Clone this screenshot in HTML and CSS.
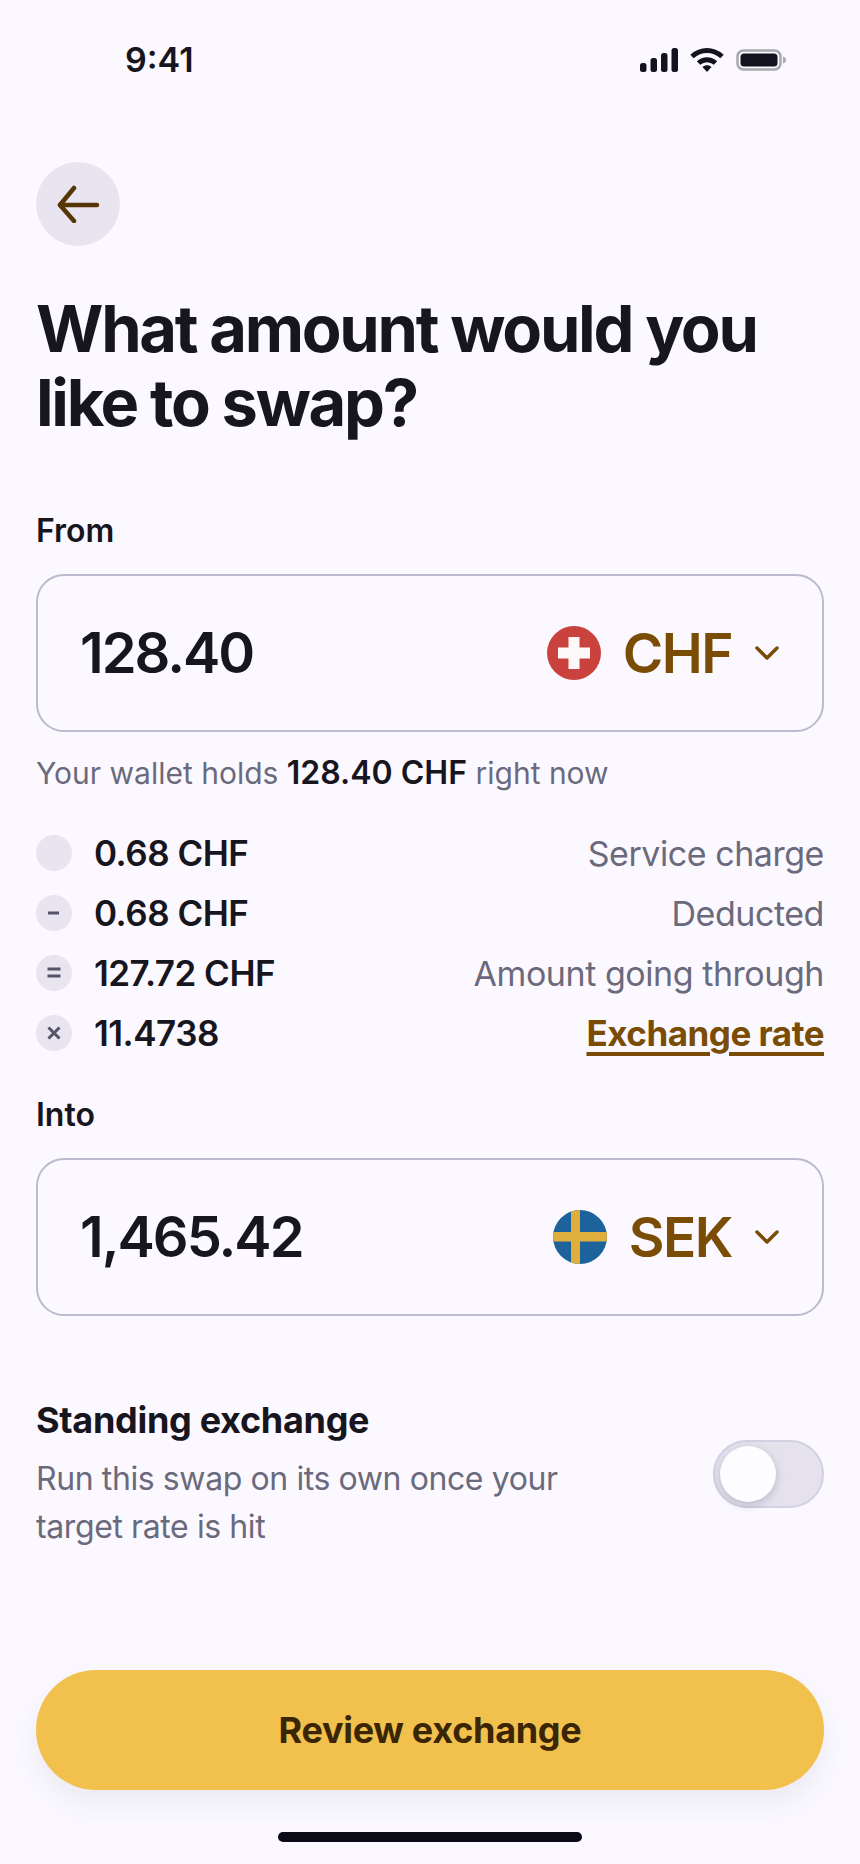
FILE: index.html
```html
<!DOCTYPE html>
<html lang="en">

<head>
    <meta charset="UTF-8">
    <meta name="viewport" content="width=device-width, initial-scale=1.0">
    <title>Swap</title>
    <link rel="stylesheet" href="styles.css">
</head>

<body>
    <div class="screen">
        <div class="status-bar">
            <span class="time">9:41</span>
            <div class="status-icons">
                <svg width="38" height="24" viewBox="0 0 38 24" fill="#14121f">
                    <rect x="0" y="15" width="6.5" height="9" rx="2.5"/>
                    <rect x="10.500" y="10" width="6.5" height="14" rx="2.5"/>
                    <rect x="21" y="5" width="6.500" height="19" rx="2.5"/>
                    <rect x="31.500" y="0" width="6.500" height="24" rx="2.5"/>
                </svg>
                <svg width="34" height="24" viewBox="0 0 34 24" fill="none" stroke="#14121f" stroke-width="5">
                    <path d="M2 8.500 C11 0.500 23 0.500 32 8.500"/>
                    <path d="M8.500 15 C13.500 10.500 20.500 10.500 25.500 15"/>
                    <path d="M12.500 19 L17 24 L21.500 19 C19 16.500 15 16.500 12.500 19 Z" fill="#14121f" stroke="none"/>
                </svg>
                <svg width="50" height="22" viewBox="0 0 50 22">
                    <rect x="1.500" y="1.500" width="43" height="19" rx="6" fill="none" stroke="#a9a8b0" stroke-width="2.500"/>
                    <rect x="4.500" y="4.500" width="37" height="13" rx="3.500" fill="#14121f"/>
                    <path d="M47 7.500 C49 8 50 9.500 50 11 C50 12.500 49 14 47 14.500 Z" fill="#a9a8b0"/>
                </svg>
            </div>
        </div>

        <button class="back-button">
            <svg width="44" height="38" viewBox="0 0 44 38" fill="none" stroke="#563605" stroke-width="4.500" stroke-linecap="round" stroke-linejoin="round">
                <path d="M41 20 H4"/>
                <path d="M18 3 L4 20 L18 36"/>
            </svg>
        </button>

        <h1>What amount would you like to swap?</h1>

        <label class="field-label label-from">From</label>
        <div class="amount-box">
            <span class="amount">128.40</span>
            <div class="currency">
                <svg class="flag" viewBox="0 0 54 54">
                    <circle cx="27" cy="27" r="27" fill="#c9423d"/>
                    <path d="M21.500 11 H32.500 V21.500 H43 V32.500 H32.500 V43 H21.500 V32.500 H11 V21.500 H21.500 Z" fill="#fdf9fb"/>
                </svg>
                <span class="code">CHF</span>
                <svg class="chevron" width="24" height="14" viewBox="0 0 24 14" fill="none" stroke="#7a4c05" stroke-width="3.500" stroke-linecap="round" stroke-linejoin="round">
                    <path d="M2 2 L12 12 L22 2"/>
                </svg>
            </div>
        </div>
        <p class="wallet-note">Your wallet holds <strong>128.40 CHF</strong> right now</p>

        <div class="fee-list">
            <div class="fee-row">
                <span class="fee-icon"></span>
                <span class="fee-value">0.68 CHF</span>
                <span class="fee-name">Service charge</span>
            </div>
            <div class="fee-row">
                <span class="fee-icon">
                    <svg width="16" height="16" viewBox="0 0 16 16" stroke="#55536a" stroke-width="3"><path d="M2 8 H13"/></svg>
                </span>
                <span class="fee-value">0.68 CHF</span>
                <span class="fee-name">Deducted</span>
            </div>
            <div class="fee-row">
                <span class="fee-icon">
                    <svg width="16" height="16" viewBox="0 0 16 16" stroke="#55536a" stroke-width="3"><path d="M1.500 4 H14.500 M1.500 11 H14.500"/></svg>
                </span>
                <span class="fee-value">127.72 CHF</span>
                <span class="fee-name">Amount going through</span>
            </div>
            <div class="fee-row">
                <span class="fee-icon">
                    <svg width="16" height="16" viewBox="0 0 16 16" stroke="#55536a" stroke-width="3"><path d="M2.500 2.500 L13.500 13.500 M13.500 2.500 L2.500 13.500"/></svg>
                </span>
                <span class="fee-value">11.4738</span>
                <a class="fee-link" href="#">Exchange rate</a>
            </div>
        </div>

        <label class="field-label label-into">Into</label>
        <div class="amount-box">
            <span class="amount">1,465.42</span>
            <div class="currency">
                <svg class="flag" viewBox="0 0 54 54">
                    <clipPath id="flagClip"><circle cx="27" cy="27" r="27"/></clipPath>
                    <g clip-path="url(#flagClip)">
                        <rect width="54" height="54" fill="#1c639c"/>
                        <rect x="18" width="9" height="54" fill="#dfae3c"/>
                        <rect y="22" width="54" height="9.500" fill="#dfae3c"/>
                    </g>
                </svg>
                <span class="code">SEK</span>
                <svg class="chevron" width="24" height="14" viewBox="0 0 24 14" fill="none" stroke="#7a4c05" stroke-width="3.500" stroke-linecap="round" stroke-linejoin="round">
                    <path d="M2 2 L12 12 L22 2"/>
                </svg>
            </div>
        </div>

        <div class="standing">
            <div class="standing-text">
                <h2>Standing exchange</h2>
                <p>Run this swap on its own once your target rate is hit</p>
            </div>
            <div class="toggle"><div class="knob"></div></div>
        </div>

        <button class="review-button">Review exchange</button>
        <div class="home-bar"></div>
    </div>
</body>

</html>
```

FILE: styles.css
```css
body {
    font-family: Inter, "Liberation Sans", sans-serif;
    background-color: #fbf9ff;
    color: #17151e;
    margin: 0;
    padding: 0;
}

.screen {
    display: flex;
    flex-direction: column;
    height: 1864px;
    padding: 0 36px;
    box-sizing: border-box;
    overflow: hidden;
}

.status-bar {
    display: flex;
    justify-content: space-between;
    align-items: center;
    height: 24px;
    margin-top: 48px;
    padding-left: 89px;
}

.time {
    font-size: 34px;
    font-weight: 600;
    line-height: 24px;
}

.status-icons {
    display: flex;
    align-items: center;
    gap: 12px;
    margin-right: 38px;
}

.back-button {
    display: flex;
    justify-content: center;
    align-items: center;
    width: 84px;
    height: 84px;
    margin-top: 90px;
    padding: 0;
    background-color: #e8e5f1;
    border: none;
    border-radius: 50%;
}

h1 {
    width: 760px;
    margin: 46px 0 0;
    font-size: 65px;
    font-weight: 700;
    line-height: 74px;
    letter-spacing: -2.300px;
}

.field-label {
    display: block;
    font-size: 32px;
    font-weight: 600;
    line-height: 36px;
}

.label-from {
    margin-top: 73px;
    margin-bottom: 25px;
}

.label-into {
    margin-top: 34px;
    margin-bottom: 25px;
}

.amount-box {
    display: flex;
    justify-content: space-between;
    align-items: center;
    height: 158px;
    padding: 0 43px 0 42px;
    box-sizing: border-box;
    border: 2px solid #bcbacf;
    border-radius: 28px;
}

.amount {
    font-size: 56px;
    font-weight: 600;
    letter-spacing: -2px;
}

.currency {
    display: flex;
    align-items: center;
}

.flag {
    width: 54px;
    height: 54px;
}

.code {
    margin-left: 22px;
    font-size: 55px;
    font-weight: 600;
    letter-spacing: -1.500px;
    color: #7a4c05;
}

.chevron {
    margin-left: 23px;
}

.wallet-note {
    margin: 23px 0 0;
    font-size: 30px;
    line-height: 36px;
    color: #6b6a7c;
}

.wallet-note strong {
    font-size: 32px;
    font-weight: 600;
    color: #17151e;
}

.fee-list {
    display: flex;
    flex-direction: column;
    margin-top: 32px;
}

.fee-row {
    display: flex;
    align-items: center;
    height: 60px;
}

.fee-icon {
    display: flex;
    justify-content: center;
    align-items: center;
    flex: none;
    width: 36px;
    height: 36px;
    background-color: #e8e5f1;
    border-radius: 50%;
}

.fee-value {
    margin-left: 22px;
    font-size: 35px;
    font-weight: 600;
    letter-spacing: -0.500px;
}

.fee-name {
    margin-left: auto;
    font-size: 34px;
    letter-spacing: -0.450px;
    color: #6b6a7c;
}

.fee-link {
    margin-left: auto;
    font-size: 35px;
    font-weight: 700;
    letter-spacing: -0.500px;
    color: #7a4c05;
    text-decoration: underline;
    text-decoration-thickness: 4px;
    text-underline-offset: 6px;
}

.standing {
    display: flex;
    justify-content: space-between;
    align-items: flex-start;
    margin-top: 82px;
}

.standing-text {
    width: 560px;
}

h2 {
    margin: 0;
    font-size: 36px;
    font-weight: 700;
    line-height: 44px;
    letter-spacing: -0.300px;
}

.standing-text p {
    margin: 13px 0 0;
    font-size: 32px;
    line-height: 48px;
    letter-spacing: -0.400px;
    color: #6b6a7c;
}

.toggle {
    display: flex;
    align-items: center;
    width: 111px;
    height: 68px;
    margin-top: 42px;
    padding-left: 5px;
    box-sizing: border-box;
    background-color: #e5e2ee;
    border: 2px solid #d3d0e1;
    border-radius: 34px;
}

.knob {
    width: 56px;
    height: 56px;
    background-color: #fdfcff;
    border-radius: 50%;
    box-shadow: 0 3px 8px rgba(60, 55, 90, 0.25);
}

.review-button {
    height: 120px;
    margin-top: auto;
    background-color: #f2c04d;
    border: none;
    border-radius: 60px;
    box-shadow: 0 14px 28px rgba(60, 55, 90, 0.08);
    font-family: inherit;
    font-size: 36px;
    font-weight: 700;
    letter-spacing: -0.300px;
    color: #3a2505;
}

.home-bar {
    flex: none;
    align-self: center;
    width: 304px;
    height: 10px;
    margin: 42px 0 22px;
    background-color: #0c0a16;
    border-radius: 5px;
}
```
